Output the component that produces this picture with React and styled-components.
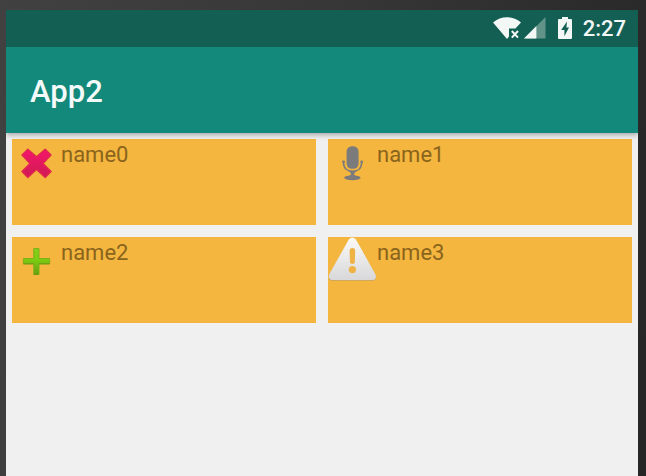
import React from "react";
import styled, { createGlobalStyle } from "styled-components";

const GlobalStyle = createGlobalStyle`
  * {
    box-sizing: border-box;
  }

  body {
    margin: 0;
    font-family: Roboto, "Liberation Sans", sans-serif;
  }
`;

const Bezel = styled.div`
  display: flex;
  min-height: 100vh;
  padding: 10px 8px 0 6px;
  background: linear-gradient(100deg, #424141 0%, #383737 45%, #262626 100%);
`;

const Screen = styled.div`
  flex: 1;
  display: flex;
  flex-direction: column;
  background-color: #f0f0f0;
`;

const StatusBar = styled.div`
  display: flex;
  align-items: center;
  justify-content: flex-end;
  height: 37px;
  padding: 1px 12px 0 0;
  color: #f3f8f7;
  background-color: #135f54;
`;

const StatusIcon = styled.svg`
  display: block;
  margin-right: ${(props) => props.$gap}px;
`;

const Clock = styled.time`
  font-size: 22px;
  line-height: 26px;
  font-weight: 500;
`;

const AppBar = styled.header`
  display: flex;
  align-items: center;
  height: 86px;
  padding: 4px 24px 0;
  color: #f3fbfa;
  background-color: #13897b;
  box-shadow: 0 2px 5px rgba(0, 0, 0, 0.3);
  clip-path: inset(0 0 -8px 0);
`;

const Title = styled.h1`
  margin: 0;
  font-size: 31px;
  line-height: 36px;
  font-weight: 500;
`;

const Grid = styled.ul`
  display: grid;
  grid-template-columns: 1fr 1fr;
  gap: 12px;
  margin: 0;
  padding: 6px;
  list-style: none;
`;

const Tile = styled.li`
  display: flex;
  align-items: flex-start;
  height: 86px;
  background-color: #f4b63f;
`;

const TileIcon = styled.svg`
  display: block;
  flex: none;
`;

const Name = styled.span`
  padding-top: 3px;
  font-size: 22px;
  line-height: 26px;
  color: #8a641c;
`;

function WifiIcon() {
  return (
    <StatusIcon $gap={2} width="29" height="24" viewBox="0 0 29 24">
      <path
        d="M0 5.6C8 -1.4 20 -1.4 28 5.6L22.4 11.6H16V19.6L14 22Z"
        fill="currentColor"
      />
      <path
        d="M18.8 14L25 20.6M25 14L18.8 20.6"
        stroke="currentColor"
        strokeWidth="2"
      />
    </StatusIcon>
  );
}

function SignalIcon() {
  return (
    <StatusIcon $gap={12} width="22" height="24" viewBox="0 0 22 24">
      <path d="M0 21.5L21.5 0V21.5Z" fill="#629389" />
      <path d="M0 21.5L12.4 9.1V21.5Z" fill="currentColor" />
    </StatusIcon>
  );
}

function BatteryIcon() {
  return (
    <StatusIcon $gap={11} width="14" height="24" viewBox="0 0 14 24">
      <path
        d="M4 0H10V2H13Q14 2 14 3V21Q14 22 13 22H1Q0 22 0 21V3Q0 2 1 2H4Z"
        fill="currentColor"
      />
      <path d="M9 4.6L3.2 13H6.4V19.2L11 10.6H8.4Z" fill="#135f54" />
    </StatusIcon>
  );
}

function DeleteIcon() {
  return (
    <TileIcon width="49" height="48" viewBox="0 0 49 48">
      <defs>
        <linearGradient id="pink" x1="0" y1="0" x2="0" y2="1">
          <stop offset="0" stopColor="#f5156c" />
          <stop offset="1" stopColor="#cf1b52" />
        </linearGradient>
      </defs>
      <path
        d="M15.8 10.2L24.5 17.8L33.2 10.2L39 16L31 24.4L39 32.6L33.2 38.4L24.5 30.6L15.8 38.4L10 32.6L18 24.4L10 16Z"
        fill="url(#pink)"
        stroke="#e2264f"
        strokeWidth="1.4"
        strokeLinejoin="round"
      />
    </TileIcon>
  );
}

function MicIcon() {
  return (
    <TileIcon width="49" height="48" viewBox="0 0 49 48" fill="#7c7b7c">
      <rect x="18.6" y="7.2" width="12" height="22.6" rx="5.2" />
      <path
        d="M15.6 22.6V24C15.6 29.4 19.6 32.2 24.6 32.2S33.6 29.4 33.6 24V22.6"
        fill="none"
        stroke="#7c7b7c"
        strokeWidth="1.6"
      />
      <circle cx="15.5" cy="22.8" r="1.4" />
      <circle cx="33.7" cy="22.8" r="1.4" />
      <path d="M20.6 32H28.6Q26 33.6 26 36H23.2Q23.2 33.6 20.6 32Z" />
      <ellipse cx="24.4" cy="38.8" rx="8.2" ry="2.4" />
      <path d="M20 37.4Q24.4 33.4 29 37.4Z" />
    </TileIcon>
  );
}

function AddIcon() {
  return (
    <TileIcon width="49" height="48" viewBox="0 0 49 48">
      <defs>
        <linearGradient id="green" x1="0" y1="0" x2="0" y2="1">
          <stop offset="0" stopColor="#84cf1c" />
          <stop offset="0.45" stopColor="#7ccb12" />
          <stop offset="1" stopColor="#66a010" />
        </linearGradient>
      </defs>
      <path
        d="M21.8 11.6H27V21.6H37.6V26.8H27V37.4H21.8V26.8H11.4V21.6H21.8Z"
        fill="url(#green)"
        stroke="#7bb018"
        strokeLinejoin="round"
      />
      <path d="M11.4 26.8H21.8M27 26.8H37.6M21.8 37.4H27" stroke="#6a9a14" />
    </TileIcon>
  );
}

function WarningIcon() {
  return (
    <TileIcon width="49" height="48" viewBox="0 0 49 48">
      <defs>
        <linearGradient id="silver" x1="0" y1="0" x2="0" y2="1">
          <stop offset="0" stopColor="#fbfaf8" />
          <stop offset="1" stopColor="#d8d8da" />
        </linearGradient>
      </defs>
      <path
        d="M20.8 3Q24.4 -1.2 28 3L47.2 38Q49.4 43.4 44.4 43.8H4.4Q-0.6 43.4 1.4 38Z"
        fill="#c4a468"
      />
      <path
        d="M20.8 2.4Q24.4 -1.6 28 2.4L47.2 37Q49.4 42.6 44.4 43H4.4Q-0.6 42.6 1.4 37Z"
        fill="url(#silver)"
      />
      <path
        d="M21.6 13.8Q21.6 11 24.4 11T27.2 13.8L26.8 25.4Q24.4 28.8 22 25.4Z"
        fill="#eeb344"
      />
      <circle cx="24.4" cy="32.6" r="3.6" fill="#eeb344" />
    </TileIcon>
  );
}

const items = [
  { name: "name0", Icon: DeleteIcon },
  { name: "name1", Icon: MicIcon },
  { name: "name2", Icon: AddIcon },
  { name: "name3", Icon: WarningIcon },
];

function App() {
  return (
    <>
      <GlobalStyle />
      <Bezel>
        <Screen>
          <StatusBar>
            <WifiIcon />
            <SignalIcon />
            <BatteryIcon />
            <Clock>2:27</Clock>
          </StatusBar>
          <AppBar>
            <Title>App2</Title>
          </AppBar>
          <Grid>
            {items.map(({ name, Icon }) => (
              <Tile key={name}>
                <Icon />
                <Name>{name}</Name>
              </Tile>
            ))}
          </Grid>
        </Screen>
      </Bezel>
    </>
  );
}

export default App;
